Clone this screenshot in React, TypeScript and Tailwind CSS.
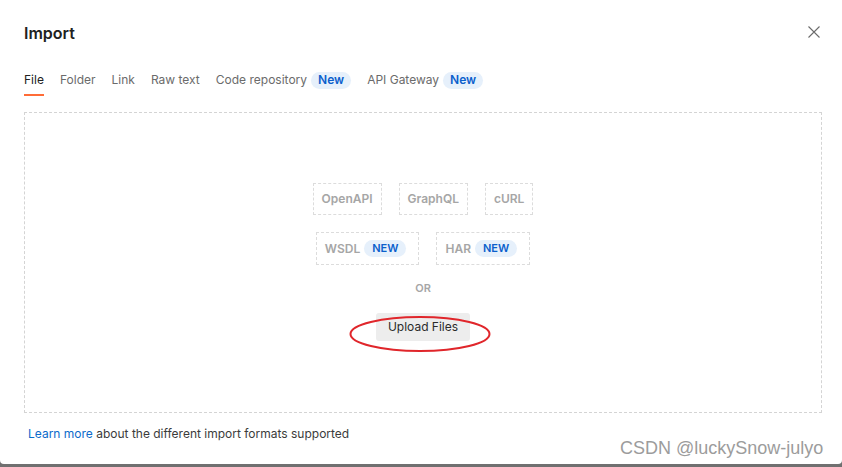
import React from "react";

const font = { fontFamily: "Inter, 'Noto Sans', sans-serif" };

function Badge({ children, upper }: { children: React.ReactNode; upper?: boolean }) {
  return (
    <span
      className={`inline-flex items-center rounded-full bg-[#e6f0fb] text-[#0b5fcc] font-semibold ${
        upper ? "text-[11px] h-[17px] px-[8px]" : "text-[12px] h-[17px] px-[7px]"
      }`}
    >
      {children}
    </span>
  );
}

function FormatBtn({ children, className = "" }: { children: React.ReactNode; className?: string }) {
  return (
    <div
      className={`flex items-center gap-[4px] border border-dashed border-[#dcdcdc] text-[12px] font-semibold text-[#a6a6a6] ${className}`}
    >
      {children}
    </div>
  );
}

export default function App() {
  return (
    <div className="relative w-[842px] h-[467px] bg-[#707070] overflow-hidden" style={font}>
      <div className="relative flex flex-col h-[464px] bg-white rounded-b-[4px]">
        {/* header */}
        <div className="flex items-center justify-between pl-[24px] pr-[20px] pt-[22px] h-[44px]">
          <h1 className="text-[16px] font-semibold text-[#212121] leading-none">Import</h1>
          <svg width="14" height="14" viewBox="0 0 14 14" className="mr-[1px] -mt-[2px]">
            <path d="M1.5 1.5 L12.5 12.5 M12.5 1.5 L1.5 12.5" stroke="#6b6b6b" strokeWidth="1.1" />
          </svg>
        </div>

        {/* tabs */}
        <div className="flex items-start gap-[16px] px-[24px] mt-[26px] text-[12px] text-[#6b6b6b] h-[42px]">
          <div className="flex flex-col">
            <span className="text-[#212121] leading-[20px]">File</span>
            <span className="mt-[4px] h-[2px] w-[20px] bg-[#ff6c37]" />
          </div>
          <span className="leading-[20px]">Folder</span>
          <span className="leading-[20px]">Link</span>
          <span className="leading-[20px]">Raw text</span>
          <span className="flex items-center gap-[4px] leading-[20px]">
            Code repository <Badge>New</Badge>
          </span>
          <span className="flex items-center gap-[4px] leading-[20px]">
            API Gateway <Badge>New</Badge>
          </span>
        </div>

        {/* drop zone */}
        <div className="ml-[24px] mr-[20px] h-[301px] border border-dashed border-[#d4d4d4] flex flex-col items-center justify-center">
          <div className="flex flex-col items-center -mt-[1px]">
            <div className="flex gap-[17px]">
              <FormatBtn className="h-[32px] px-[8px]">OpenAPI</FormatBtn>
              <FormatBtn className="h-[32px] px-[8px]">GraphQL</FormatBtn>
              <FormatBtn className="h-[32px] px-[8px]">cURL</FormatBtn>
            </div>
            <div className="flex gap-[17px] mt-[17px]">
              <FormatBtn className="h-[33px] pl-[8px] pr-[12px]">
                WSDL <Badge upper>NEW</Badge>
              </FormatBtn>
              <FormatBtn className="h-[33px] pl-[8px] pr-[12px]">
                HAR <Badge upper>NEW</Badge>
              </FormatBtn>
            </div>
            <div className="mt-[17px] text-[11px] font-semibold text-[#a6a6a6] leading-[12px]">OR</div>
            <button className="mt-[19px] h-[28px] px-[12px] bg-[#ededed] rounded-[3px] text-[12px] text-[#2b2b2b]">
              Upload Files
            </button>
          </div>
        </div>

        {/* footer */}
        <div className="px-[28px] mt-[12px] text-[12px] text-[#3b3b3b]">
          <span className="text-[#0b6bcb]">Learn more</span> about the different import formats supported
        </div>
      </div>

      {/* red annotation ellipse */}
      <svg className="absolute left-[348px] top-[313px]" width="144" height="40" viewBox="0 0 144 40">
        <ellipse cx="72" cy="21" rx="69.5" ry="17" fill="none" stroke="#e0262b" strokeWidth="2" />
      </svg>

      {/* watermark */}
      <div
        className="absolute left-[620px] top-[437px] text-[18px] text-[#9c9c9c] leading-[22px]"
        style={{ fontFamily: "'Liberation Sans', Arial, sans-serif" }}
      >
        CSDN @luckySnow-julyo
      </div>
    </div>
  );
}
